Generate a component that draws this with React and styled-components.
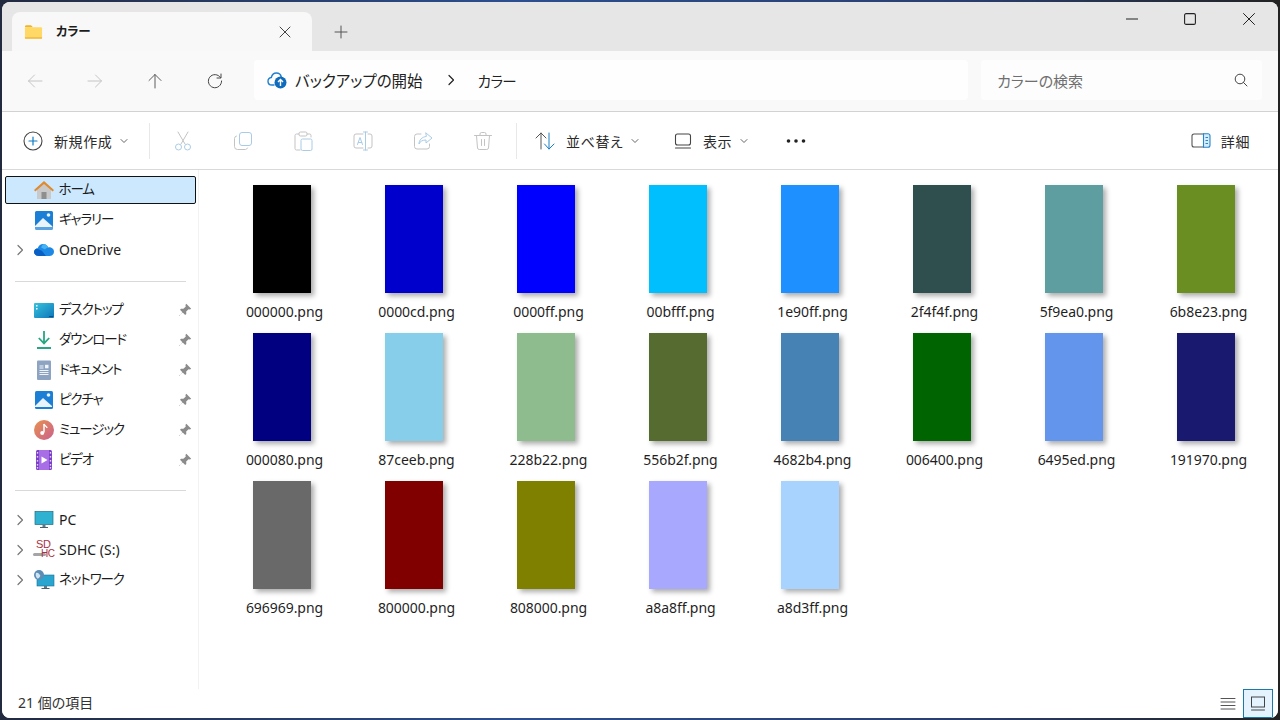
import React from "react";
import styled, { createGlobalStyle } from "styled-components";

const GlobalStyle = createGlobalStyle`
  html, body {
    margin: 0;
    padding: 0;
    width: 1280px;
    height: 720px;
    overflow: hidden;
    background: #1c2f5c;
  }
  #root {
    width: 1280px;
    height: 720px;
  }
  * {
    box-sizing: border-box;
  }
`;

const Desktop = styled.div`
  width: 1280px;
  height: 720px;
  padding: 2px;
  background: linear-gradient(90deg, #222a40 0%, #2c4f8f 40%, #2a3f70 75%, #222 100%);
`;

const Window = styled.div`
  width: 1276px;
  height: 716px;
  display: flex;
  flex-direction: column;
  border-radius: 8px;
  overflow: hidden;
  background: #fff;
  color: #1a1a1a;
  font-family: "Noto Sans", "Noto Sans CJK JP", sans-serif;
  font-size: 14px;
  font-feature-settings: "palt";
`;

const TitleBar = styled.div`
  height: 49px;
  flex: none;
  display: flex;
  padding: 10px 0 0 10px;
  background: #e6e6e6;
`;

const Tab = styled.div`
  width: 300px;
  height: 39px;
  display: flex;
  align-items: center;
  padding: 0 21px 0 12px;
  background: #f8f8f8;
  border-radius: 8px 8px 0 0;
`;

const TabTitle = styled.span`
  flex: 1;
  margin: -3px 0 0 13px;
  font-size: 12.5px;
  font-weight: 600;
  letter-spacing: -0.3px;
  color: #1c1c1c;
`;

const NewTab = styled.div`
  width: 58px;
  height: 39px;
  display: flex;
  align-items: center;
  justify-content: center;
`;

const WindowControls = styled.div`
  margin: -10px 0 0 auto;
  display: flex;
`;

const ControlButton = styled.div`
  width: 58.5px;
  height: 34px;
  display: flex;
  align-items: center;
  justify-content: center;
`;

const AddressRow = styled.div`
  height: 61px;
  flex: none;
  display: flex;
  align-items: flex-start;
  background: #f9f9f9;
  border-bottom: 1px solid #d2d2d2;
`;

const NavButton = styled.div`
  width: 60px;
  height: 60px;
  flex: none;
  display: flex;
  align-items: center;
  justify-content: center;
`;

const NavGroup = styled.div`
  width: 249px;
  flex: none;
  display: flex;
  margin-left: 3px;
`;

const AddressBar = styled.div`
  width: 714px;
  height: 40px;
  margin-top: 9px;
  flex: none;
  display: flex;
  align-items: center;
  padding-left: 13px;
  background: #fefefe;
  border-radius: 4px;
  font-size: 15.5px;
  color: #222;
`;

const Crumb = styled.span`
  margin-left: 8px;
`;

const CurrentCrumb = styled.span`
  font-size: 14.5px;
  letter-spacing: -0.6px;
`;

const CrumbArrow = styled.span`
  display: flex;
  margin: 0 21px 0 22px;
`;

const SearchBox = styled.div`
  width: 281px;
  height: 40px;
  margin: 9px 0 0 13px;
  flex: none;
  display: flex;
  align-items: center;
  justify-content: space-between;
  padding: 0 14px 0 16px;
  background: #fdfdfd;
  border-radius: 4px;
  color: #6f6f6f;
  font-size: 15px;
`;

const Toolbar = styled.div`
  height: 58px;
  flex: none;
  display: flex;
  align-items: center;
  background: #fff;
  border-bottom: 1px solid #d9d9d9;
`;

const ToolLabelButton = styled.div`
  width: ${(p) => p.$width}px;
  flex: none;
  display: flex;
  align-items: center;
  padding-left: ${(p) => p.$pad || 0}px;
  font-size: 14px;
  letter-spacing: 0.6px;
  color: #2b2b2b;
`;

const ToolLabel = styled.span`
  margin: 0 7px 0 ${(p) => p.$gap || 10}px;
`;

const IconButton = styled.div`
  width: 60px;
  flex: none;
  display: flex;
  justify-content: center;
`;

const ToolSeparator = styled.div`
  width: 1px;
  height: 36px;
  flex: none;
  margin: ${(p) => p.$margin};
  background: #e8e8e8;
`;

const DetailsButton = styled.div`
  margin: 0 28px 0 auto;
  display: flex;
  align-items: center;
  gap: 10px;
  letter-spacing: 0.6px;
  color: #2b2b2b;
`;

const Body = styled.div`
  flex: 1;
  min-height: 0;
  display: flex;
`;

const Sidebar = styled.nav`
  width: 197px;
  flex: none;
  padding: 6px 0 0 3px;
  border-right: 1px solid #f2f2f2;
`;

const NavRow = styled.div`
  width: 191px;
  height: ${(p) => (p.$selected ? 28 : 30)}px;
  margin: ${(p) => (p.$selected ? "0 0 1px" : "0")};
  padding-left: ${(p) => (p.$selected ? 0 : 1.5)}px;
  display: flex;
  align-items: center;
  background: ${(p) => (p.$selected ? "#cce8ff" : "transparent")};
  border: ${(p) => (p.$selected ? "1.5px solid #111" : "none")};
  border-radius: 2px;
  color: #1c1c1c;
`;

const Chevron = styled.span`
  width: 26.5px;
  flex: none;
  display: flex;
  justify-content: center;
`;

const NavIcon = styled.span`
  width: 22px;
  height: 22px;
  flex: none;
  margin-right: 4px;
  display: flex;
  align-items: center;
  justify-content: center;
`;

const NavLabel = styled.span`
  flex: 1;
  line-height: 1;
  font-size: ${(p) => (p.$kana ? 13.5 : 14)}px;
  letter-spacing: ${(p) => (p.$kana ? "-1.1px" : "0")};
`;

const PinSlot = styled.span`
  width: 24px;
  flex: none;
  display: flex;
  padding-left: 6px;
`;

const NavDivider = styled.div`
  width: 171px;
  height: 1px;
  margin: ${(p) => p.$margin};
  background: #d9d9d9;
`;

const FileGrid = styled.main`
  flex: 1;
  padding: 15px 0 0 17px;
  display: grid;
  grid-template-columns: repeat(8, 132px);
  grid-auto-rows: 148px;
`;

const FileItem = styled.div`
  display: flex;
  flex-direction: column;
  align-items: center;
`;

const Thumb = styled.div`
  width: 58px;
  height: 108px;
  background: ${(p) => p.$color};
  box-shadow: 3px 3px 5px rgba(0, 0, 0, 0.33);
`;

const FileName = styled.div`
  margin-top: 9px;
  padding-left: 5px;
  line-height: 20px;
  font-size: 14px;
  letter-spacing: -0.05px;
  color: #1f1f1f;
`;

const StatusBar = styled.div`
  height: 29px;
  flex: none;
  display: flex;
  align-items: center;
  padding: 0 5px 0 16px;
  background: #fff;
  color: #333;
  font-size: 14px;
`;

const StatusText = styled.span`
  margin-top: -3px;
`;

const ViewToggles = styled.div`
  margin-left: auto;
  display: flex;
  align-items: center;
`;

const ViewToggle = styled.div`
  width: 30px;
  height: 29px;
  display: flex;
  align-items: center;
  justify-content: center;
  background: ${(p) => (p.$active ? "#e5f3ff" : "transparent")};
  border: ${(p) => (p.$active ? "1.5px solid #1979a8" : "none")};
`;

const SdLabel = styled.span`
  position: relative;
  display: block;
  width: 22px;
  height: 22px;
  color: #a8323f;
  font-family: "Liberation Sans", sans-serif;
  font-size: 11px;
  line-height: 10px;
  letter-spacing: -0.3px;
`;

const SdTop = styled.span`
  position: absolute;
  left: 3px;
  top: 0;
`;

const SdBottom = styled.span`
  position: absolute;
  left: 8px;
  top: 10px;
  font-size: 10px;
  letter-spacing: -0.5px;
`;

const SdBar = styled.span`
  position: absolute;
  left: 0;
  top: 14px;
  width: 13px;
  height: 3px;
  background: #a5a5a5;
  border-radius: 2px;
`;

const Svg = ({ size = 16, children, ...props }) => (
  <svg width={size} height={size} viewBox="0 0 16 16" fill="none" {...props}>
    {children}
  </svg>
);

const Line = ({ d, color = "#555", w = 1 }) => (
  <path d={d} stroke={color} strokeWidth={w} strokeLinecap="round" strokeLinejoin="round" fill="none" />
);

const FolderIcon = () => (
  <svg width="19" height="16" viewBox="0 0 20 16">
    <path d="M1 2.500C1 1.700 1.600 1 2.400 1h5l2 2H1z" fill="#f0b429" />
    <rect x="1" y="3" width="18" height="12" rx="1" fill="#ffd866" />
    <rect x="1" y="13.500" width="18" height="1.500" fill="#efb93f" />
  </svg>
);

const SmallChevronDown = () => (
  <Svg size={10} viewBox="0 0 10 10">
    <Line d="M2 3.500 5 6.500 8 3.500" color="#666" />
  </Svg>
);

const ChevronRight = ({ color = "#777", w = 1.2 }) => (
  <Svg size={12} viewBox="0 0 12 12">
    <Line d="M4 1.500 8.500 6 4 10.500" color={color} w={w} />
  </Svg>
);

const Pin = () => (
  <svg width="14" height="14" viewBox="0 0 14 14">
    <path d="M8.300 0.800 13.200 5.700 12 6.600 10.600 6.200 8.200 8.600 8.300 11 7.200 12 4.400 9.200 1.200 13 0.900 12.700 4.700 9.500 2 6.800 3 5.700 5.400 5.800 7.800 3.400 7.400 2z" fill="#8b8b8b" />
  </svg>
);

const HomeIcon = () => (
  <svg width="22" height="22" viewBox="0 0 22 22">
    <path d="M4 10 11 4l7 6v10H4z" fill="#c9c9c9" />
    <rect x="8.500" y="13" width="5" height="7" fill="#8e8e8e" />
    <path d="M1 11 11 2l10 9-1.300 1.400L11 5 2.300 12.400z" fill="#e08a2c" />
  </svg>
);

const PictureIcon = ({ stacked }) => (
  <svg width="20" height="20" viewBox="0 0 20 20">
    <rect x="1" y="1" width="18" height={stacked ? 17 : 18} rx="1.500" fill="#1b7fd6" />
    {stacked && <path d="M1 16v2.500A1.500 1.500 0 0 0 2.500 20h15a1.500 1.500 0 0 0 1.500-1.500V16z" fill="#5aa3e0" />}
    <path d="M1 16 9 8l9 8v1H1z" fill="#e9f3fb" />
    <circle cx="14.500" cy="5" r="1.800" fill="#e9f3fb" />
  </svg>
);

const CloudBackupIcon = () => (
  <svg width="20" height="18" viewBox="0 0 20 18" fill="none">
    <path d="M7 14H5C2.600 14 1 12.300 1 10.200 1 8.200 2.400 6.800 4.300 6.500 5 3.600 7.200 2 9.400 2c2.500 0 4.400 1.600 4.900 4" stroke="#1f7fd0" strokeWidth="1.400" strokeLinecap="round" />
    <circle cx="13.500" cy="11.500" r="6" fill="#0f6cbd" />
    <path d="M13.500 15V8.500M11 11l2.500-2.500L16 11" stroke="#fff" strokeWidth="1.400" />
  </svg>
);

const DesktopIcon = () => (
  <svg width="20" height="16" viewBox="0 0 20 16">
    <defs>
      <linearGradient id="dsk" x1="0" y1="0" x2="1" y2="1">
        <stop offset="0" stopColor="#36c3de" />
        <stop offset="1" stopColor="#0e76b8" />
      </linearGradient>
    </defs>
    <rect x="0" y="1" width="20" height="15" rx="1" fill="url(#dsk)" />
    <rect x="2" y="3" width="1.500" height="1.500" fill="#fff" />
    <rect x="2" y="6" width="1.500" height="1.500" fill="#fff" />
    <rect x="15" y="14" width="4" height="1" fill="#0b4f80" />
  </svg>
);

const DownloadIcon = () => (
  <svg width="18" height="20" viewBox="0 0 18 20">
    <path d="M9 1v12M3.800 8 9 13.400 14.200 8" stroke="#25a783" strokeWidth="1.800" fill="none" />
    <path d="M2 18h14" stroke="#25a783" strokeWidth="2" />
  </svg>
);

const DocumentIcon = () => (
  <svg width="16" height="20" viewBox="0 0 16 20">
    <rect x="1" y="0.500" width="14" height="19.500" rx="1" fill="#8ca3c1" />
    <path d="M3.500 6h4M3.500 8h4M3.500 10.500h9M3.500 12.500h9M3.500 14.500h9" stroke="#f0f4f9" strokeWidth="1" />
    <rect x="9" y="4.800" width="3.500" height="3.500" fill="#f0f4f9" />
  </svg>
);

const MusicIcon = () => (
  <svg width="20" height="20" viewBox="0 0 20 20">
    <defs>
      <linearGradient id="msc" x1="0" y1="0" x2="1" y2="1">
        <stop offset="0" stopColor="#e9914f" />
        <stop offset="1" stopColor="#c9608f" />
      </linearGradient>
    </defs>
    <circle cx="10" cy="10" r="10" fill="url(#msc)" />
    <path d="M10 4v8.500" stroke="#fff" strokeWidth="1.500" />
    <path d="M10 4c.5 2 3 2 3 4" stroke="#fff" strokeWidth="1.300" fill="none" />
    <circle cx="8.200" cy="13" r="2" fill="#fff" />
  </svg>
);

const VideoIcon = () => (
  <svg width="16" height="20" viewBox="0 0 16 20">
    <rect width="16" height="20" rx="1.500" fill="#7c3fc9" />
    <rect x="3" y="0" width="10" height="20" fill="#a76ee6" />
    <path d="M5.500 6.500 11.500 10l-6 3.500z" fill="#fff" />
    {[2, 6, 10, 14, 17].map((y) => (
      <rect key={y} x="0.800" y={y} width="1.400" height="1.600" fill="#e2d2f6" />
    ))}
    {[2, 6, 10, 14, 17].map((y) => (
      <rect key={y} x="13.800" y={y} width="1.400" height="1.600" fill="#e2d2f6" />
    ))}
  </svg>
);

const PcIcon = () => (
  <svg width="20" height="18" viewBox="0 0 20 18">
    <rect x="1" y="0.500" width="18" height="13" fill="#2fb2d2" stroke="#1c6d88" strokeWidth="0.700" />
    <rect x="8.500" y="13.500" width="3" height="2.500" fill="#5f7a86" />
    <rect x="6" y="16" width="8" height="1" fill="#4d5f69" />
  </svg>
);

const NetworkIcon = () => (
  <svg width="22" height="20" viewBox="0 0 22 20">
    <rect x="4" y="5" width="17" height="11" fill="#29a5d0" stroke="#1b7196" strokeWidth="0.600" />
    <rect x="11" y="16" width="3" height="2" fill="#5f7a86" />
    <rect x="8.500" y="18" width="8" height="1" fill="#4d5f69" />
    <circle cx="6" cy="5" r="5" fill="#5d8cb5" />
    <path d="M3 3c2-1 3 1 4 2S6 8 5 8.500 2 6 3 3z" fill="#cfe4f2" />
  </svg>
);

const SdIcon = () => (
  <SdLabel>
    <SdBar />
    <SdTop>SD</SdTop>
    <SdBottom>HC</SdBottom>
  </SdLabel>
);

const OneDriveIcon = () => (
  <svg width="20" height="14" viewBox="0 0 20 14">
    <path d="M5 13C2 13 0 11.200 0 9c0-2 1.600-3.600 3.600-3.800C4.800 2 7.400 0.500 10 1c2.300.4 3.600 2 4.200 3.400 3-.4 5.800 1.400 5.800 4.400 0 2.400-2 4.200-4.400 4.200z" fill="#1e88e5" />
    <path d="M5 13C2 13 0 11.200 0 9c0-1.700 1.200-3.200 2.800-3.600l5 2.400L12 13z" fill="#0a5fc4" />
    <path d="M10 1c2.300.4 3.600 2 4.200 3.400-1.400.3-2.400 1-3.200 2L7.200 4.600C7.800 2.500 8.600 1.400 10 1z" fill="#45b4f2" />
  </svg>
);

const topLinks = [
  { label: "ホーム", icon: <HomeIcon />, selected: true, kana: true },
  { label: "ギャラリー", icon: <PictureIcon stacked />, kana: true },
  { label: "OneDrive", icon: <OneDriveIcon />, expandable: true },
];

const pinnedLinks = [
  { label: "デスクトップ", icon: <DesktopIcon /> },
  { label: "ダウンロード", icon: <DownloadIcon /> },
  { label: "ドキュメント", icon: <DocumentIcon /> },
  { label: "ピクチャ", icon: <PictureIcon /> },
  { label: "ミュージック", icon: <MusicIcon /> },
  { label: "ビデオ", icon: <VideoIcon /> },
].map((link) => ({ ...link, pinned: true, kana: true }));

const deviceLinks = [
  { label: "PC", icon: <PcIcon />, expandable: true },
  { label: "SDHC (S:)", icon: <SdIcon />, expandable: true },
  { label: "ネットワーク", icon: <NetworkIcon />, expandable: true, kana: true },
];

const files = [
  ["000000", "#000000"],
  ["0000cd", "#0000cd"],
  ["0000ff", "#0000ff"],
  ["00bfff", "#00bfff"],
  ["1e90ff", "#1e90ff"],
  ["2f4f4f", "#2f4f4f"],
  ["5f9ea0", "#5f9ea0"],
  ["6b8e23", "#6b8e23"],
  ["000080", "#000080"],
  ["87ceeb", "#87ceeb"],
  ["228b22", "#8fbc8f"],
  ["556b2f", "#556b2f"],
  ["4682b4", "#4682b4"],
  ["006400", "#006400"],
  ["6495ed", "#6495ed"],
  ["191970", "#191970"],
  ["696969", "#696969"],
  ["800000", "#800000"],
  ["808000", "#808000"],
  ["a8a8ff", "#a8a8ff"],
  ["a8d3ff", "#a8d3ff"],
];

const faded = "#c3c3c3";
const fadedBlue = "#a9cbe6";

const NavLink = ({ link }) => (
  <NavRow $selected={link.selected}>
    <Chevron>{link.expandable && <ChevronRight />}</Chevron>
    <NavIcon>{link.icon}</NavIcon>
    <NavLabel $kana={link.kana}>{link.label}</NavLabel>
    <PinSlot>{link.pinned && <Pin />}</PinSlot>
  </NavRow>
);

export default function App() {
  return (
    <>
      <GlobalStyle />
      <Desktop>
        <Window>
          <TitleBar>
            <Tab>
              <FolderIcon />
              <TabTitle>カラー</TabTitle>
              <Svg size={12} viewBox="0 0 12 12">
                <Line d="M1 1 11 11M11 1 1 11" color="#444" />
              </Svg>
            </Tab>
            <NewTab>
              <Svg size={14} viewBox="0 0 14 14">
                <Line d="M7 1v12M1 7h12" color="#555" />
              </Svg>
            </NewTab>
            <WindowControls>
              <ControlButton>
                <Svg size={12} viewBox="0 0 12 12">
                  <Line d="M0 6h12" color="#222" />
                </Svg>
              </ControlButton>
              <ControlButton>
                <Svg size={12} viewBox="0 0 12 12">
                  <rect x="0.600" y="0.600" width="10.800" height="10.800" rx="1.500" stroke="#222" strokeWidth="1.100" />
                </Svg>
              </ControlButton>
              <ControlButton>
                <Svg size={12} viewBox="0 0 12 12">
                  <Line d="M0.500 0.500 11.500 11.500M11.500 0.500 0.500 11.500" color="#222" />
                </Svg>
              </ControlButton>
            </WindowControls>
          </TitleBar>

          <AddressRow>
            <NavGroup>
              <NavButton>
                <Svg>
                  <Line d="M15 8H1.500M7.500 2 1.500 8l6 6" color="#c4c4c4" />
                </Svg>
              </NavButton>
              <NavButton>
                <Svg>
                  <Line d="M1 8h13.500M8.500 2l6 6-6 6" color="#c4c4c4" />
                </Svg>
              </NavButton>
              <NavButton>
                <Svg>
                  <Line d="M8 15V1.500M2 7.500l6-6 6 6" color="#5c5c5c" />
                </Svg>
              </NavButton>
              <NavButton>
                <Svg>
                  <Line d="M13.500 4.500A6.600 6.600 0 1 0 14.600 8M14 1v4h-4" color="#444" />
                </Svg>
              </NavButton>
            </NavGroup>
            <AddressBar>
              <CloudBackupIcon />
              <Crumb>バックアップの開始</Crumb>
              <CrumbArrow>
                <ChevronRight color="#222" />
              </CrumbArrow>
              <CurrentCrumb>カラー</CurrentCrumb>
            </AddressBar>
            <SearchBox>
              <span>カラーの検索</span>
              <Svg size={14} viewBox="0 0 14 14">
                <circle cx="6" cy="6" r="4.800" stroke="#444" />
                <Line d="M9.500 9.500 13 13" color="#444" />
              </Svg>
            </SearchBox>
          </AddressRow>

          <Toolbar>
            <ToolLabelButton $width={147} $pad={21}>
              <Svg size={20} viewBox="0 0 20 20">
                <circle cx="10" cy="10" r="9" stroke="#444" strokeWidth="1.100" />
                <Line d="M10 6v8M6 10h8" color="#0f7cc4" w={1.2} />
              </Svg>
              <ToolLabel $gap={11}>新規作成</ToolLabel>
              <SmallChevronDown />
            </ToolLabelButton>
            <ToolSeparator $margin="0 3px 0 0" />
            <IconButton>
              <Svg size={20} viewBox="0 0 20 20">
                <Line d="M5 1l7 12M15 1 8 13" color={faded} />
                <circle cx="5.500" cy="16" r="3" stroke={fadedBlue} />
                <circle cx="14.500" cy="16" r="3" stroke={fadedBlue} />
              </Svg>
            </IconButton>
            <IconButton>
              <Svg size={20} viewBox="0 0 20 20">
                <rect x="6.500" y="1.500" width="12" height="13" rx="2.500" stroke={fadedBlue} />
                <Line d="M3.500 5A2.500 2.500 0 0 0 1.500 7.500v8A3 3 0 0 0 4.500 18.500h8a2.500 2.500 0 0 0 2-1.500" color={faded} />
              </Svg>
            </IconButton>
            <IconButton>
              <Svg size={20} viewBox="0 0 20 20">
                <Line d="M6 3H3.500A1.500 1.500 0 0 0 2 4.500v13A1.500 1.500 0 0 0 3.500 19H7" color={faded} />
                <Line d="M14 3h2.500A1.500 1.500 0 0 1 18 4.500V6" color={faded} />
                <rect x="6" y="1" width="8" height="4" rx="1.500" stroke={faded} />
                <rect x="8" y="8" width="11" height="11.500" rx="1.500" stroke={fadedBlue} />
              </Svg>
            </IconButton>
            <IconButton>
              <Svg size={20} viewBox="0 0 20 20">
                <Line d="M10 3H3A2 2 0 0 0 1 5v10a2 2 0 0 0 2 2h7M15 3h2a2 2 0 0 1 2 2v10a2 2 0 0 1-2 2h-2" color={faded} />
                <Line d="M12.500 1v18M10.500 1h4M10.500 19h4" color={fadedBlue} />
                <Line d="M4.500 13.500 7 6.500l2.500 7M5.300 11.500h3.400" color={fadedBlue} />
              </Svg>
            </IconButton>
            <IconButton>
              <Svg size={20} viewBox="0 0 20 20">
                <Line d="M8 3H4a2.500 2.500 0 0 0-2.500 2.500v10A2.500 2.500 0 0 0 4 18h10a2.500 2.500 0 0 0 2.500-2.500V13" color={faded} />
                <Line d="M13 2l6 5-6 5V9c-3 0-6 1-7 4 0-4 3-7 7-7.500z" color={fadedBlue} />
              </Svg>
            </IconButton>
            <IconButton>
              <Svg size={20} viewBox="0 0 20 20">
                <Line d="M1.500 4.500h17M7 4.500V3a1.500 1.500 0 0 1 1.500-1.500h3A1.500 1.500 0 0 1 13 3v1.500" color={faded} />
                <Line d="M3.500 4.500l1 12.500a1.800 1.800 0 0 0 1.800 1.500h7.400a1.800 1.800 0 0 0 1.800-1.500l1-12.500" color={faded} />
                <Line d="M8.500 8.500v6M11.500 8.500v6" color={faded} />
              </Svg>
            </IconButton>
            <ToolSeparator $margin="0 16px 0 3px" />
            <ToolLabelButton $width={141} $pad={2}>
              <Svg size={20} viewBox="0 0 20 20">
                <Line d="M6 18V2M1 7l5-5 5 5" color="#555" />
                <Line d="M14 2v16M9.500 13l4.500 5 5-5" color="#1a7fc7" />
              </Svg>
              <ToolLabel $gap={11}>並べ替え</ToolLabel>
              <SmallChevronDown />
            </ToolLabelButton>
            <ToolLabelButton $width={111}>
              <Svg size={18} viewBox="0 0 18 18">
                <rect x="1.500" y="2" width="15" height="11" rx="2" stroke="#444" strokeWidth="1.100" />
                <Line d="M1.500 16h15" color="#444" w={1.2} />
              </Svg>
              <ToolLabel $gap={11}>表示</ToolLabel>
              <SmallChevronDown />
            </ToolLabelButton>
            <Svg size={22} viewBox="0 0 22 22">
              <circle cx="3.500" cy="11" r="1.800" fill="#222" />
              <circle cx="11" cy="11" r="1.800" fill="#222" />
              <circle cx="18.500" cy="11" r="1.800" fill="#222" />
            </Svg>
            <DetailsButton>
              <svg width="20" height="15" viewBox="0 0 20 15" fill="none">
                <path d="M13 1H3a2 2 0 0 0-2 2v9a2 2 0 0 0 2 2h10" stroke="#555" strokeWidth="1.100" />
                <path d="M12.500 .8H17a2 2 0 0 1 2 2v9.400a2 2 0 0 1-2 2h-4.500z" fill="#d7ecfb" stroke="#2386cc" strokeWidth="1.100" />
                <path d="M14.500 4.500H17M14.500 7.500H17M14.500 10.500H17" stroke="#2386cc" />
              </svg>
              <span>詳細</span>
            </DetailsButton>
          </Toolbar>

          <Body>
            <Sidebar>
              {topLinks.map((link) => (
                <NavLink key={link.label} link={link} />
              ))}
              <NavDivider $margin="16px 0 13px 10px" />
              {pinnedLinks.map((link) => (
                <NavLink key={link.label} link={link} />
              ))}
              <NavDivider $margin="15px 0 14px 10px" />
              {deviceLinks.map((link) => (
                <NavLink key={link.label} link={link} />
              ))}
            </Sidebar>
            <FileGrid>
              {files.map(([name, color]) => (
                <FileItem key={name}>
                  <Thumb $color={color} />
                  <FileName>{name}.png</FileName>
                </FileItem>
              ))}
            </FileGrid>
          </Body>

          <StatusBar>
            <StatusText>21 個の項目</StatusText>
            <ViewToggles>
              <ViewToggle>
                <Svg size={16} viewBox="0 0 16 16">
                  <Line d="M1 2.500h14M1 6h14M1 9.500h14M1 13h14" color="#555" />
                </Svg>
              </ViewToggle>
              <ViewToggle $active>
                <Svg size={16} viewBox="0 0 16 16">
                  <rect x="1.500" y="1" width="13" height="10" stroke="#444" />
                  <Line d="M1.500 14h13" color="#444" />
                </Svg>
              </ViewToggle>
            </ViewToggles>
          </StatusBar>
        </Window>
      </Desktop>
    </>
  );
}
